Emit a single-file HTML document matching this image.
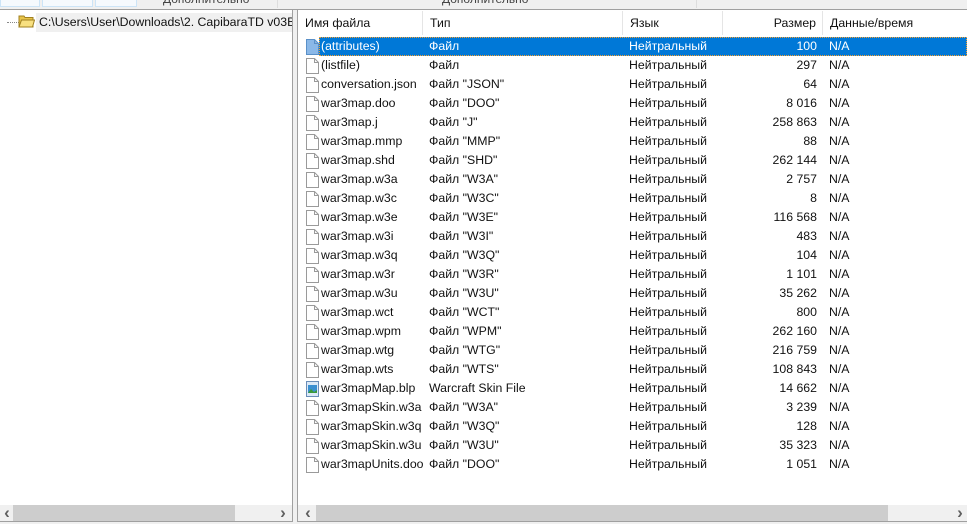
<!DOCTYPE html>
<html><head><meta charset="utf-8"><style>
*{margin:0;padding:0;box-sizing:border-box}
body{width:967px;height:524px;background:#f0f0f0;font-family:"Segoe UI","Liberation Sans","DejaVu Sans",sans-serif;font-size:12.3px;color:#111;position:relative;overflow:hidden}
.abs{position:absolute}
.top{left:0;top:0;width:967px;height:10px;background:#f0f0f0;border-bottom:1px solid #a0a0a0}
.tb{top:0;height:7px;border:1px solid #cce4f7;border-top:none;background:#f5f9fd}
.tt{top:-8px;font-size:12px;color:#444;white-space:nowrap}
.left{left:0;top:10px;width:293px;height:512px;background:#fff;border-right:1px solid #a0a0a0;border-bottom:1px solid #a0a0a0}
.right{left:297px;top:10px;width:670px;height:512px;background:#fff;border-left:1px solid #a0a0a0;border-bottom:1px solid #a0a0a0}
.hdr{top:11px;height:24px;left:298px;width:669px;background:#fff}
.hc{top:0;height:24px;line-height:24px;border-right:1px solid #e5e5e5;padding-left:7px}
.row{position:absolute;left:0;width:669px;height:19px;line-height:19px;white-space:nowrap}
.row span{position:absolute;top:0}
.sel{position:absolute;left:21px;top:0;right:0;height:19px;background:#0078d7;border:1px dotted #f7a030}
.sb{height:16px;top:505px;background:#f0f0f0}
.thumb{position:absolute;top:0;height:16px;background:#cdcdcd}
.ar{position:absolute;top:0;width:14px;height:16px;line-height:15px;text-align:center;font-size:17px;color:#606060;font-weight:bold}
</style></head><body>
<div class="abs top"></div>
<div class="abs tb" style="left:0;width:40px"></div>
<div class="abs tb" style="left:42px;width:51px"></div>
<div class="abs tb" style="left:95px;width:42px"></div>
<div class="abs tt" style="left:163px">Дополнительно</div>
<div class="abs" style="left:277px;top:0;width:1px;height:8px;background:#ddd"></div>
<div class="abs tt" style="left:442px">Дополнительно</div>
<div class="abs" style="left:696px;top:0;width:1px;height:8px;background:#ddd"></div>

<div class="abs left"></div>
<div class="abs" style="left:7px;top:22px;width:12px;border-top:1px dotted #888"></div>
<svg class="abs" style="left:18px;top:14px" width="17" height="14" viewBox="0 0 17 14">
<path d="M1 2h5l1 1.5h8v9.5H1z" fill="#e8c44a" stroke="#a08020"/>
<path d="M1 13L3.5 6H16.5L14.5 13z" fill="#f8e080" stroke="#a08020"/></svg>
<div class="abs" style="left:36px;top:13px;width:256px;height:19px;line-height:19px;background:#f0f0f0;padding-left:3px;white-space:nowrap;overflow:hidden">C:\Users\User\Downloads\2. CapibaraTD v03Bet</div>

<div class="abs right"></div>
<div class="abs hdr">
<div class="abs hc" style="left:0;width:125px">Имя файла</div>
<div class="abs hc" style="left:125px;width:200px">Тип</div>
<div class="abs hc" style="left:325px;width:100px">Язык</div>
<div class="abs hc" style="left:425px;width:100px;text-align:right;padding-right:6px">Размер</div>
<div class="abs hc" style="left:525px;width:144px;border-right:none">Данные/время</div>
</div>

<div class="abs" id="list" style="left:298px;top:37px;width:669px;height:460px">
</div>

<div class="abs sb" style="left:0;width:292px">
<div class="ar" style="left:0">&lsaquo;</div><div class="thumb" style="left:13px;width:222px"></div><div class="ar" style="left:276px">&rsaquo;</div></div>
<div class="abs sb" style="left:298px;width:669px">
<div class="ar" style="left:3px">&lsaquo;</div><div class="thumb" style="left:18px;width:572px"></div><div class="ar" style="left:655px">&rsaquo;</div></div>

<script>
var d=[["(attributes)","Файл","100"],["(listfile)","Файл","297"],["conversation.json",'Файл "JSON"',"64"],["war3map.doo",'Файл "DOO"',"8 016"],["war3map.j",'Файл "J"',"258 863"],["war3map.mmp",'Файл "MMP"',"88"],["war3map.shd",'Файл "SHD"',"262 144"],["war3map.w3a",'Файл "W3A"',"2 757"],["war3map.w3c",'Файл "W3C"',"8"],["war3map.w3e",'Файл "W3E"',"116 568"],["war3map.w3i",'Файл "W3I"',"483"],["war3map.w3q",'Файл "W3Q"',"104"],["war3map.w3r",'Файл "W3R"',"1 101"],["war3map.w3u",'Файл "W3U"',"35 262"],["war3map.wct",'Файл "WCT"',"800"],["war3map.wpm",'Файл "WPM"',"262 160"],["war3map.wtg",'Файл "WTG"',"216 759"],["war3map.wts",'Файл "WTS"',"108 843"],["war3mapMap.blp","Warcraft Skin File","14 662"],["war3mapSkin.w3a",'Файл "W3A"',"3 239"],["war3mapSkin.w3q",'Файл "W3Q"',"128"],["war3mapSkin.w3u",'Файл "W3U"',"35 323"],["war3mapUnits.doo",'Файл "DOO"',"1 051"]];
var h="";
d.forEach(function(r,i){
var s=i==0,c=s?"color:#fff;":"";
var ic;
if(i==18)ic='<svg style="position:absolute;left:8px;top:2px" width="13" height="16"><rect x="0.5" y="0.5" width="12" height="15" fill="#dbe9f7" stroke="#6a8db8"/><rect x="2" y="4" width="9" height="8" fill="#3a8fd0"/><path d="M2 12L5 8L8 11L11 9V12z" fill="#3a9a3a"/></svg>';
else ic='<svg style="position:absolute;left:8px;top:2px" width="13" height="16"><path d="M0.5 0.5H8.5L12.5 4.5V15.5H0.5z" fill="'+(s?"#8ab8e8":"#fff")+'" stroke="'+(s?"#5a90c8":"#9a9a9a")+'"/><path d="M8.5 0.5V4.5H12.5" fill="none" stroke="'+(s?"#5a90c8":"#9a9a9a")+'"/></svg>';
h+='<div class="row" style="top:'+(i*19)+'px">'+(s?'<div class="sel"></div>':'')+ic+
'<span style="left:23px;'+c+'">'+r[0]+'</span><span style="left:131px;'+c+'">'+r[1]+'</span><span style="left:331px;'+c+'">Нейтральный</span><span style="right:150px;'+c+'">'+r[2]+'</span><span style="left:531px;'+c+'">N/A</span></div>';
});
document.getElementById("list").innerHTML=h;
</script>
</body></html>
